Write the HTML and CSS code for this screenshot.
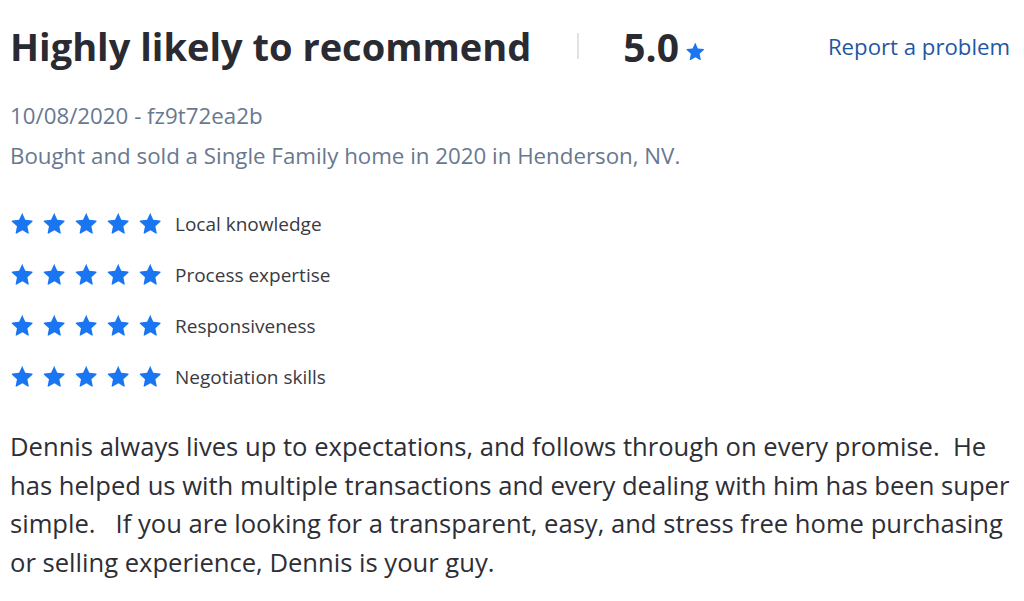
FILE: index.html
```html
<!DOCTYPE html>
<html>
<head>
<meta charset="utf-8">
<link rel="stylesheet" href="styles.css">
</head>
<body>
<div class="review">
  <div class="head">
    <h1 class="title">Highly likely to recommend</h1>
    <div class="sep"></div>
    <div class="score">5.0 <svg class="star-sm" viewBox="0 0 24 24"><path d="M12 2.6l2.7 5.9 6.4.7c.6.1.8.8.4 1.2l-4.8 4.3 1.3 6.3c.1.6-.5 1-1 .7L12 18.5l-5.6 3.2c-.5.3-1.1-.1-1-.7l1.3-6.3-4.8-4.3c-.4-.4-.2-1.1.4-1.2l6.4-.7 2.7-5.9c.2-.5 1-.5 1.2 0z"/></svg></div>
    <a class="report" href="#">Report a problem</a>
  </div>
  <div class="meta">10/08/2020 - fz9t72ea2b</div>
  <div class="meta">Bought and sold a Single Family home in 2020 in Henderson, NV.</div>
  <div class="ratings">
    <div class="row"><div class="stars"></div><span>Local knowledge</span></div>
    <div class="row"><div class="stars"></div><span>Process expertise</span></div>
    <div class="row"><div class="stars"></div><span>Responsiveness</span></div>
    <div class="row"><div class="stars"></div><span>Negotiation skills</span></div>
  </div>
  <p class="text">Dennis always lives up to expectations, and follows through on every promise.&nbsp; He has helped us with multiple transactions and every dealing with him has been super simple. &nbsp; If you are looking for a transparent, easy, and stress free home purchasing or selling experience, Dennis is your guy.</p>
</div>
<script>
document.querySelectorAll('.stars').forEach(function(s){
  var svg='<svg class="star" viewBox="0 0 24 24"><path d="M12 2.6l2.7 5.9 6.4.7c.6.1.8.8.4 1.2l-4.8 4.3 1.3 6.3c.1.6-.5 1-1 .7L12 18.5l-5.6 3.2c-.5.3-1.1-.1-1-.7l1.3-6.3-4.8-4.3c-.4-.4-.2-1.1.4-1.2l6.4-.7 2.7-5.9c.2-.5 1-.5 1.2 0z"/></svg>';
  s.innerHTML=svg+svg+svg+svg+svg;
});
</script>
</body>
</html>
```
FILE: styles.css
```css
html, body { margin: 0; padding: 0; background: #fff; }
body { font-family: "Open Sans", "Liberation Sans", sans-serif; }
.review { padding: 0 14px 0 10px; }
.head { display: flex; align-items: center; height: 96px; padding-bottom: 4px; box-sizing: border-box; }
.title { margin: 0; font-size: 38px; font-weight: 700; color: #2a2a32; }
.sep { width: 2px; height: 26px; background: #e3e3e3; margin-left: 46px; }
.score { margin-left: 44px; font-size: 39px; font-weight: 700; color: #2a2a32; display: flex; align-items: center; gap: 6px; }
.star-sm { width: 21px; height: 21px; fill: #1976f0; margin-top: 10px; }
.report { margin-left: auto; font-size: 22.2px; color: #1f57a4; text-decoration: none; }
.meta { font-size: 22.3px; color: #68788f; line-height: 40px; }
.ratings { margin-top: 22px; display: flex; flex-direction: column; }
.row { display: flex; align-items: center; height: 51px; }
.stars { display: flex; gap: 7px; }
.star { width: 25px; height: 25px; fill: #1976f0; }
.row span { margin-left: 12px; font-size: 19px; color: #3a3a42; }
.text { margin: 26px 0 0; font-size: 25.6px; line-height: 38.5px; color: #2e2e36; }
```
